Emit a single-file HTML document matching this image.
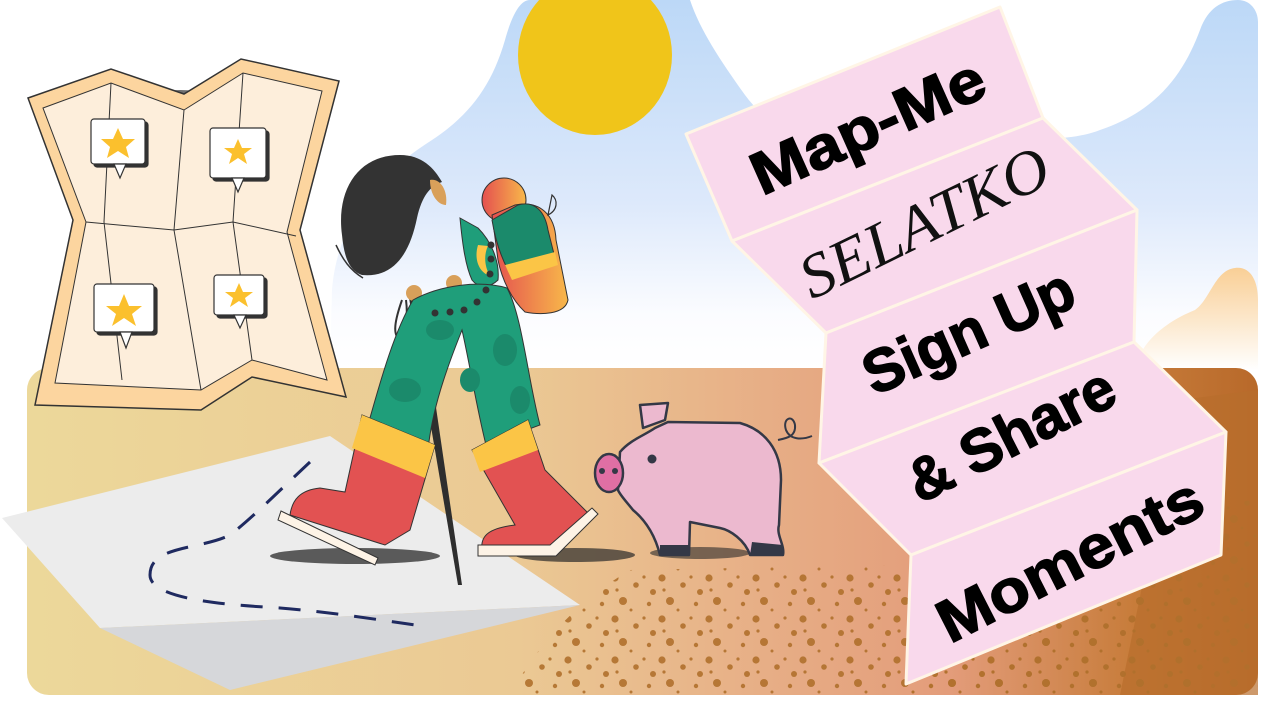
<!DOCTYPE html>
<html><head><meta charset="utf-8"><style>
html,body{margin:0;padding:0;background:#fff;width:1280px;height:720px;overflow:hidden}
svg{display:block}
</style></head><body>
<svg width="1280" height="720" viewBox="0 0 1280 720" xmlns="http://www.w3.org/2000/svg">
<defs>
<linearGradient id="sky" x1="0" y1="0" x2="0" y2="1"><stop offset="0" stop-color="#bcd8f7"/><stop offset="0.55" stop-color="#dde9fb"/><stop offset="0.85" stop-color="#fbfcff"/><stop offset="1" stop-color="#ffffff"/></linearGradient>
<linearGradient id="peach" x1="0" y1="0" x2="0" y2="1"><stop offset="0" stop-color="#f9cf96"/><stop offset="1" stop-color="#fff"/></linearGradient>
<linearGradient id="ground" x1="0" y1="0" x2="1" y2="0"><stop offset="0" stop-color="#ecd89a"/><stop offset="0.4" stop-color="#ebc994"/><stop offset="0.6" stop-color="#e7ae86"/><stop offset="0.75" stop-color="#e39c7a"/><stop offset="0.9" stop-color="#c77c3a"/><stop offset="1" stop-color="#b8692a"/></linearGradient>
<linearGradient id="roll" x1="0" y1="0" x2="1" y2="0"><stop offset="0" stop-color="#e4504f"/><stop offset="1" stop-color="#f8b84a"/></linearGradient>
<pattern id="dots" width="47" height="41" patternUnits="userSpaceOnUse"><circle cx="4" cy="4" r="3.6" fill="#b0702c"/><circle cx="25" cy="11" r="2.8" fill="#b0702c"/><circle cx="12" cy="27" r="4" fill="#b0702c"/><circle cx="38" cy="30" r="2.2" fill="#b0702c"/><circle cx="33" cy="3" r="1.6" fill="#b0702c"/><circle cx="20" cy="36" r="1.5" fill="#b0702c"/><circle cx="42" cy="18" r="3" fill="#b0702c"/><circle cx="6" cy="16" r="1.6" fill="#b0702c"/></pattern>
</defs>
<path d="M330,370 L332,290 C338,215 385,170 432,140 C470,115 492,85 505,40 C512,15 520,0 530,0 L690,0 C700,30 720,60 745,95 C770,130 820,150 880,140 C950,130 1050,150 1100,130 C1160,110 1185,70 1200,30 C1208,8 1222,0 1238,0 C1250,0 1258,10 1258,22 L1258,370 Z" fill="url(#sky)"/>
<path d="M1135,370 C1140,340 1170,320 1195,310 C1210,300 1215,270 1235,268 C1250,266 1258,280 1258,300 L1258,370 Z" fill="url(#peach)"/>
<rect x="27" y="368" width="1231" height="327" rx="22" fill="url(#ground)"/>
<path d="M1120,695 L1180,400 L1258,390 L1258,695 Z" fill="#b86e2c" opacity="0.7"/>
<path d="M510,695 C540,640 580,600 630,570 L900,565 L1200,600 L1200,695 Z" fill="url(#dots)" opacity="0.9"/>
<path d="M900,695 L960,520 L1258,500 L1258,695 Z" fill="url(#dots)" opacity="0.7"/>
<polygon points="2,518 330,436 580,605 100,628" fill="#ececec"/>
<polygon points="100,628 580,605 230,690" fill="#d6d7da"/>
<path d="M310,462 C280,490 250,520 230,535 C200,550 150,545 150,575 C150,600 230,605 280,608 C330,612 380,620 415,625" fill="none" stroke="#1f2a60" stroke-width="3" stroke-dasharray="22 16"/>
<ellipse cx="595" cy="55" rx="77" ry="80" fill="#f0c51a"/>
<ellipse cx="180" cy="100" rx="40" ry="10" fill="#333" opacity="0.7"/>
<polygon points="28,98 111,69 184,94 241,59 339,81 300,230 346,397 252,377 201,410 35,405 73,220" fill="#fcd59f" stroke="#333" stroke-width="1.5"/>
<polygon points="43,108 111,83 184,110 243,73 322,91 287,232 327,380 252,360 201,390 55,383 86,222" fill="#fdeedb" stroke="#333" stroke-width="1"/>
<path d="M111,83 L104,222 L122,380 M184,110 L174,230 L201,390 M243,73 L233,222 L252,360 M86,222 L174,230 L233,222 L296,236" fill="none" stroke="#333" stroke-width="1"/>
<g stroke="#333" stroke-width="1.2">
<rect x="94" y="122" width="54" height="45" rx="3" fill="#333"/><rect x="91" y="119" width="54" height="45" rx="3" fill="#fff"/><path d="M114,164 L120,178 L126,164Z" fill="#fff"/>
<rect x="213" y="131" width="56" height="50" rx="3" fill="#333"/><rect x="210" y="128" width="56" height="50" rx="3" fill="#fff"/><path d="M232,178 L238,192 L244,178Z" fill="#fff"/>
<rect x="97" y="287" width="60" height="48" rx="3" fill="#333"/><rect x="94" y="284" width="60" height="48" rx="3" fill="#fff"/><path d="M120,332 L126,348 L132,332Z" fill="#fff"/>
<rect x="217" y="278" width="50" height="40" rx="3" fill="#333"/><rect x="214" y="275" width="50" height="40" rx="3" fill="#fff"/><path d="M234,315 L240,328 L246,315Z" fill="#fff"/>
</g>
<g fill="#fbc02d">
<polygon points="118,128 123,139 135,139 126,147 129,158 118,151 107,158 110,147 101,139 113,139"/>
<polygon points="238,139 242,148 252,148 244,154 247,164 238,158 229,164 232,154 224,148 234,148"/>
<polygon points="124,294 129,306 142,306 132,314 136,326 124,318 112,326 116,314 106,306 119,306"/>
<polygon points="239,283 243,292 253,292 245,298 248,307 239,301 230,307 233,298 225,292 235,292"/>
</g>
<path d="M342,235 C336,190 358,155 400,155 C422,155 434,168 442,182 C430,186 422,196 417,218 C410,252 395,278 362,275 C348,270 344,255 342,235Z" fill="#333"/>
<path d="M430,180 C440,178 448,190 446,205 C438,205 430,195 430,180Z" fill="#d9a05a"/>
<path d="M336,245 C343,260 350,270 363,278" fill="none" stroke="#333" stroke-width="1.5"/>
<path d="M408,292 L420,298 L462,585 L458,585 Z" fill="#2e2e2e"/>
<path d="M402,300 C395,320 392,335 400,340 C406,335 408,315 406,300" fill="none" stroke="#333" stroke-width="2"/>
<circle cx="414" cy="293" r="8" fill="#d9a05a"/>
<circle cx="454" cy="283" r="8" fill="#d9a05a"/>
<path d="M460,218 L478,228 C490,240 500,260 498,280 C490,288 478,288 472,280 C465,265 462,240 460,218Z" fill="#1f9e7a" stroke="#333" stroke-width="1"/>
<path d="M478,245 C474,258 478,272 490,276 C484,266 484,254 488,246Z" fill="#fbc546"/>
<circle cx="491" cy="245" r="3.5" fill="#333"/><circle cx="491" cy="259" r="3.5" fill="#333"/><circle cx="490" cy="274" r="3.5" fill="#333"/>
<circle cx="504" cy="200" r="22" fill="url(#roll)" stroke="#333" stroke-width="1"/>
<path d="M492,215 L515,205 C540,200 555,215 556,240 L568,300 C565,315 540,315 525,312 C512,300 502,280 498,260Z" fill="url(#roll)" stroke="#333" stroke-width="1"/>
<path d="M492,220 L518,205 C535,200 545,212 548,230 L555,258 C540,262 520,268 508,270 C500,255 495,238 492,220Z" fill="#1b8a6b" stroke="#333" stroke-width="1"/>
<path d="M505,265 L555,252 L558,265 L512,280Z" fill="#fbc546"/>
<path d="M548,215 L552,195 C558,200 558,210 548,215Z" fill="none" stroke="#333" stroke-width="1.2"/>
<path d="M413,300 C440,285 480,280 507,288 C522,315 528,380 540,425 L486,445 C476,405 470,365 462,330 C446,370 432,410 428,450 L368,425 C382,375 395,330 413,300Z" fill="#1f9e7a" stroke="#333" stroke-width="1"/>
<g fill="#1b8a6b"><ellipse cx="440" cy="330" rx="14" ry="10"/><ellipse cx="505" cy="350" rx="12" ry="16"/><ellipse cx="405" cy="390" rx="16" ry="12"/><ellipse cx="520" cy="400" rx="10" ry="14"/><ellipse cx="470" cy="380" rx="10" ry="12"/></g>
<g fill="#333"><circle cx="435" cy="313" r="3.5"/><circle cx="450" cy="312" r="3.5"/><circle cx="464" cy="310" r="3.5"/><circle cx="477" cy="302" r="3.5"/><circle cx="486" cy="290" r="3.5"/></g>
<ellipse cx="355" cy="556" rx="85" ry="8" fill="#2a2a2a" opacity="0.75"/>
<ellipse cx="575" cy="555" rx="60" ry="7" fill="#2a2a2a" opacity="0.7"/>
<ellipse cx="700" cy="553" rx="50" ry="6" fill="#2a2a2a" opacity="0.6"/>
<path d="M362,415 L435,445 L410,530 L385,545 L290,515 C292,500 300,490 320,488 L345,492 Z" fill="#e25252" stroke="#333" stroke-width="1"/>
<path d="M362,415 L435,445 L425,478 L352,448Z" fill="#fbc546"/>
<path d="M281,511 L378,558 L375,565 L278,520Z" fill="#fdf3e6" stroke="#333" stroke-width="1"/>
<path d="M472,450 L528,420 L545,470 L590,515 L555,550 L482,550 C480,535 490,528 515,525 Z" fill="#e25252" stroke="#333" stroke-width="1"/>
<path d="M472,450 L528,420 L538,450 L480,472Z" fill="#fbc546"/>
<path d="M478,545 L550,545 L592,508 L598,514 L556,556 L478,556Z" fill="#fdf3e6" stroke="#333" stroke-width="1"/>
<g stroke="#343846" stroke-width="2.5" stroke-linejoin="round">
<path d="M620,452 C630,440 645,435 655,428 L668,422 L740,423 C765,430 781,450 781,480 L779,525 C776,535 785,545 783,555 L750,555 C745,540 730,530 720,528 L690,522 L689,555 L660,555 C655,535 645,520 633,510 C625,500 620,495 618,490 Z" fill="#ecb9cf"/>
<path d="M640,405 L668,403 L665,420 L643,428Z" fill="#ecb9cf"/>
<ellipse cx="609" cy="473" rx="14" ry="19" fill="#e06fa4"/>
<path d="M778,440 C788,438 796,436 795,425 C793,414 782,418 786,430 C790,440 802,440 812,436" fill="none" stroke-width="2"/>
</g>
<path d="M660,555 L660,545 L689,545 L689,555Z M750,555 L752,542 L783,545 L783,555Z" fill="#343846"/>
<circle cx="652" cy="459" r="4.5" fill="#343846"/><circle cx="602" cy="471" r="3" fill="#343846"/><circle cx="615" cy="471" r="3" fill="#343846"/>
<g fill="#f9d9ec" stroke="#fff5e6" stroke-width="3" stroke-linejoin="round">
<polygon points="686,134 1000,7 1043,118 732,241"/>
<polygon points="732,241 1043,118 1137,210 826,333"/>
<polygon points="826,333 1137,210 1134,342 819,463"/>
<polygon points="819,463 1134,342 1226,432 911,555"/>
<polygon points="911,555 1226,432 1221,555 906,684"/>
</g>
<g font-family="'Liberation Sans',sans-serif" font-weight="bold" fill="#000" font-size="60" stroke="#000" stroke-width="1.5">
<text transform="translate(762,196) rotate(-24)" textLength="250" lengthAdjust="spacingAndGlyphs">Map-Me</text>
<text transform="translate(874,396) rotate(-24)" textLength="225" lengthAdjust="spacingAndGlyphs">Sign Up</text>
<text transform="translate(920,504) rotate(-27)" textLength="225" lengthAdjust="spacingAndGlyphs">&amp; Share</text>
<text transform="translate(950,644) rotate(-27)" textLength="290" lengthAdjust="spacingAndGlyphs">Moments</text>
</g>
<text transform="translate(812,300) rotate(-26)" font-family="'Liberation Serif',serif" font-style="italic" font-size="62" fill="#111" textLength="270" lengthAdjust="spacingAndGlyphs">SELATKO</text>
</svg>
</body></html>
